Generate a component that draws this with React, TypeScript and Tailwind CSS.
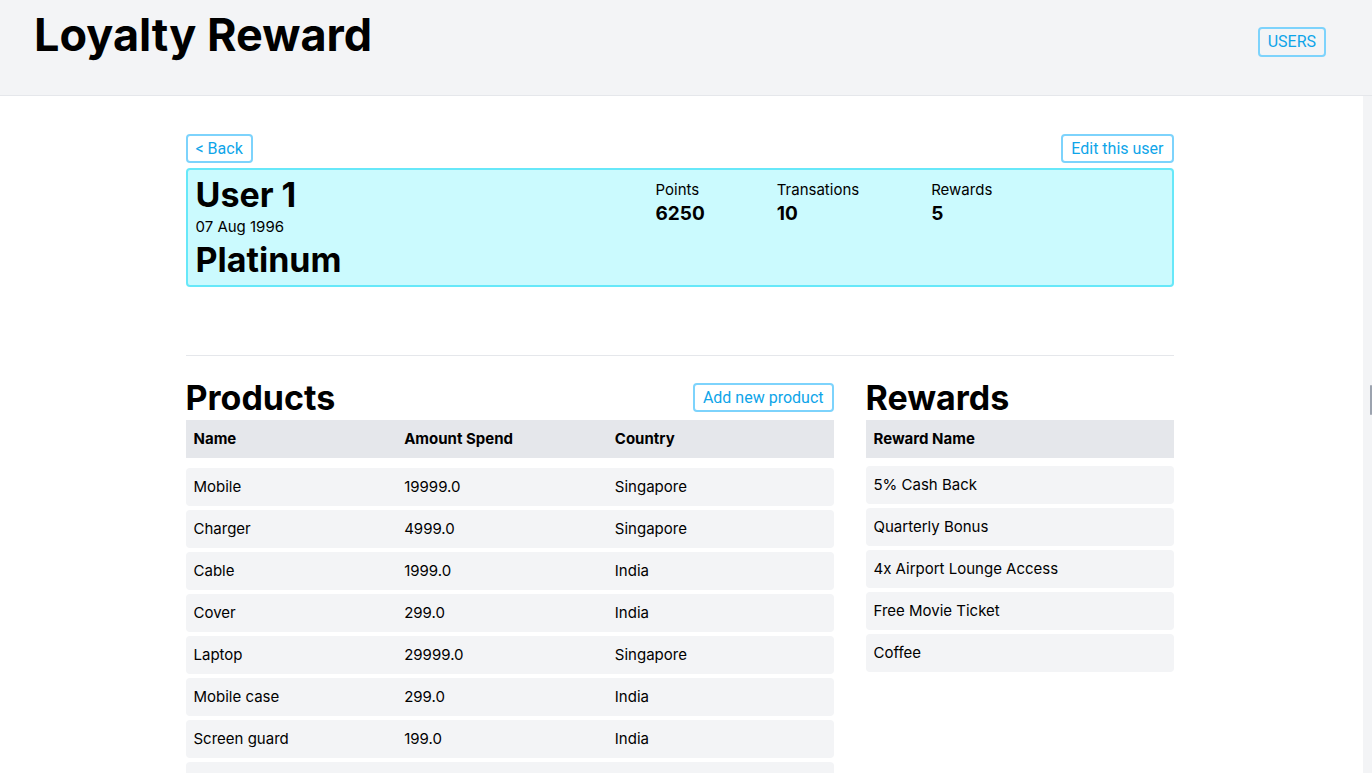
import React from "react";

const PRODUCTS = [
  { name: "Mobile", amount: "19999.0", country: "Singapore" },
  { name: "Charger", amount: "4999.0", country: "Singapore" },
  { name: "Cable", amount: "1999.0", country: "India" },
  { name: "Cover", amount: "299.0", country: "India" },
  { name: "Laptop", amount: "29999.0", country: "Singapore" },
  { name: "Mobile case", amount: "299.0", country: "India" },
  { name: "Screen guard", amount: "199.0", country: "India" },
  { name: "Earphones", amount: "999.0", country: "India" },
  { name: "Power bank", amount: "1499.0", country: "Singapore" },
];

const REWARDS = [
  "5% Cash Back",
  "Quarterly Bonus",
  "4x Airport Lounge Access",
  "Free Movie Ticket",
  "Coffee",
];

const STATS = [
  { label: "Points", value: "6250" },
  { label: "Transations", value: "10" },
  { label: "Rewards", value: "5" },
];

function OutlineButton({ children, className = "" }: { children: React.ReactNode; className?: string }) {
  return (
    <button
      className={
        "flex h-[29px] items-center rounded border-2 border-[#7dd3fc] bg-white px-2 font-['Roboto',sans-serif] text-base text-[#0ea5e9] " +
        className
      }
    >
      {children}
    </button>
  );
}

export default function App() {
  return (
    <div className="flex h-screen flex-col overflow-hidden bg-white font-['Inter',sans-serif] text-[15px] text-black">
      {/* ── Header ───────────────────────────────────────────── */}
      <header className="flex h-24 shrink-0 items-start justify-between border-b border-[#e5e7eb] bg-[#f3f4f6] pl-[34px] pr-[46px]">
        <h1 className="pt-3 text-[45px] font-bold leading-none">Loyalty Reward</h1>
        <button className="mt-[27px] flex h-[30px] items-center rounded border-2 border-[#7dd3fc] px-2 font-['Roboto',sans-serif] text-base text-[#0ea5e9]">
          USERS
        </button>
      </header>

      <div className="flex min-h-0 flex-1">
        {/* ── Content ──────────────────────────────────────────── */}
        <main className="min-w-0 flex-1 overflow-hidden pr-1">
          <div className="mx-auto max-w-[988px] pt-[38px] pb-10">
            <div className="flex justify-between">
              <OutlineButton>&lt; Back</OutlineButton>
              <OutlineButton>Edit this user</OutlineButton>
            </div>

            {/* user card */}
            <div className="mt-[5px] flex rounded border-2 border-[#67e8f9] bg-[#cbfafe] p-2">
              <div className="w-[460px]">
                <div className="text-[34px] font-bold leading-none">User 1</div>
                <div className="mt-[3px] leading-6">07 Aug 1996</div>
                <div className="mt-1 text-[34px] font-bold leading-none">Platinum</div>
              </div>
              <div className="flex gap-[72px]">
                {STATS.map((s) => (
                  <div key={s.label}>
                    <div className="leading-6">{s.label}</div>
                    <div className="text-[19px] font-bold leading-6">{s.value}</div>
                  </div>
                ))}
              </div>
            </div>

            <hr className="mt-[68px] border-[#e5e7eb]" />

            <div className="mt-6 grid grid-cols-3 gap-8">
              {/* products */}
              <section className="col-span-2">
                <div className="mb-[5px] flex items-center justify-between">
                  <h2 className="text-[34px] font-bold leading-[35px]">Products</h2>
                  <OutlineButton>Add new product</OutlineButton>
                </div>
                <div className="grid h-[38px] grid-cols-3 items-center bg-[#e5e7eb] px-2 font-bold">
                  <span>Name</span>
                  <span>Amount Spend</span>
                  <span>Country</span>
                </div>
                <div className="mt-[10px] flex flex-col gap-1">
                  {PRODUCTS.map((p) => (
                    <div key={p.name} className="grid h-[38px] grid-cols-3 items-center rounded bg-[#f3f4f6] px-2">
                      <span>{p.name}</span>
                      <span>{p.amount}</span>
                      <span>{p.country}</span>
                    </div>
                  ))}
                </div>
              </section>

              {/* rewards */}
              <section>
                <div className="mb-[5px] flex h-[35px] items-center">
                  <h2 className="text-[34px] font-bold leading-[35px]">Rewards</h2>
                </div>
                <div className="flex h-[38px] items-center bg-[#e5e7eb] px-2 font-bold">Reward Name</div>
                <div className="mt-2 flex flex-col gap-1">
                  {REWARDS.map((r) => (
                    <div key={r} className="flex h-[38px] items-center rounded bg-[#f3f4f6] px-2">
                      {r}
                    </div>
                  ))}
                </div>
              </section>
            </div>
          </div>
        </main>

        {/* scrollbar track */}
        <aside className="relative w-[9px] shrink-0 bg-[#f3f4f6]">
          <div className="absolute right-0 top-[289px] h-[30px] w-[2px] rounded bg-[#9ca3af]" />
        </aside>
      </div>
    </div>
  );
}
